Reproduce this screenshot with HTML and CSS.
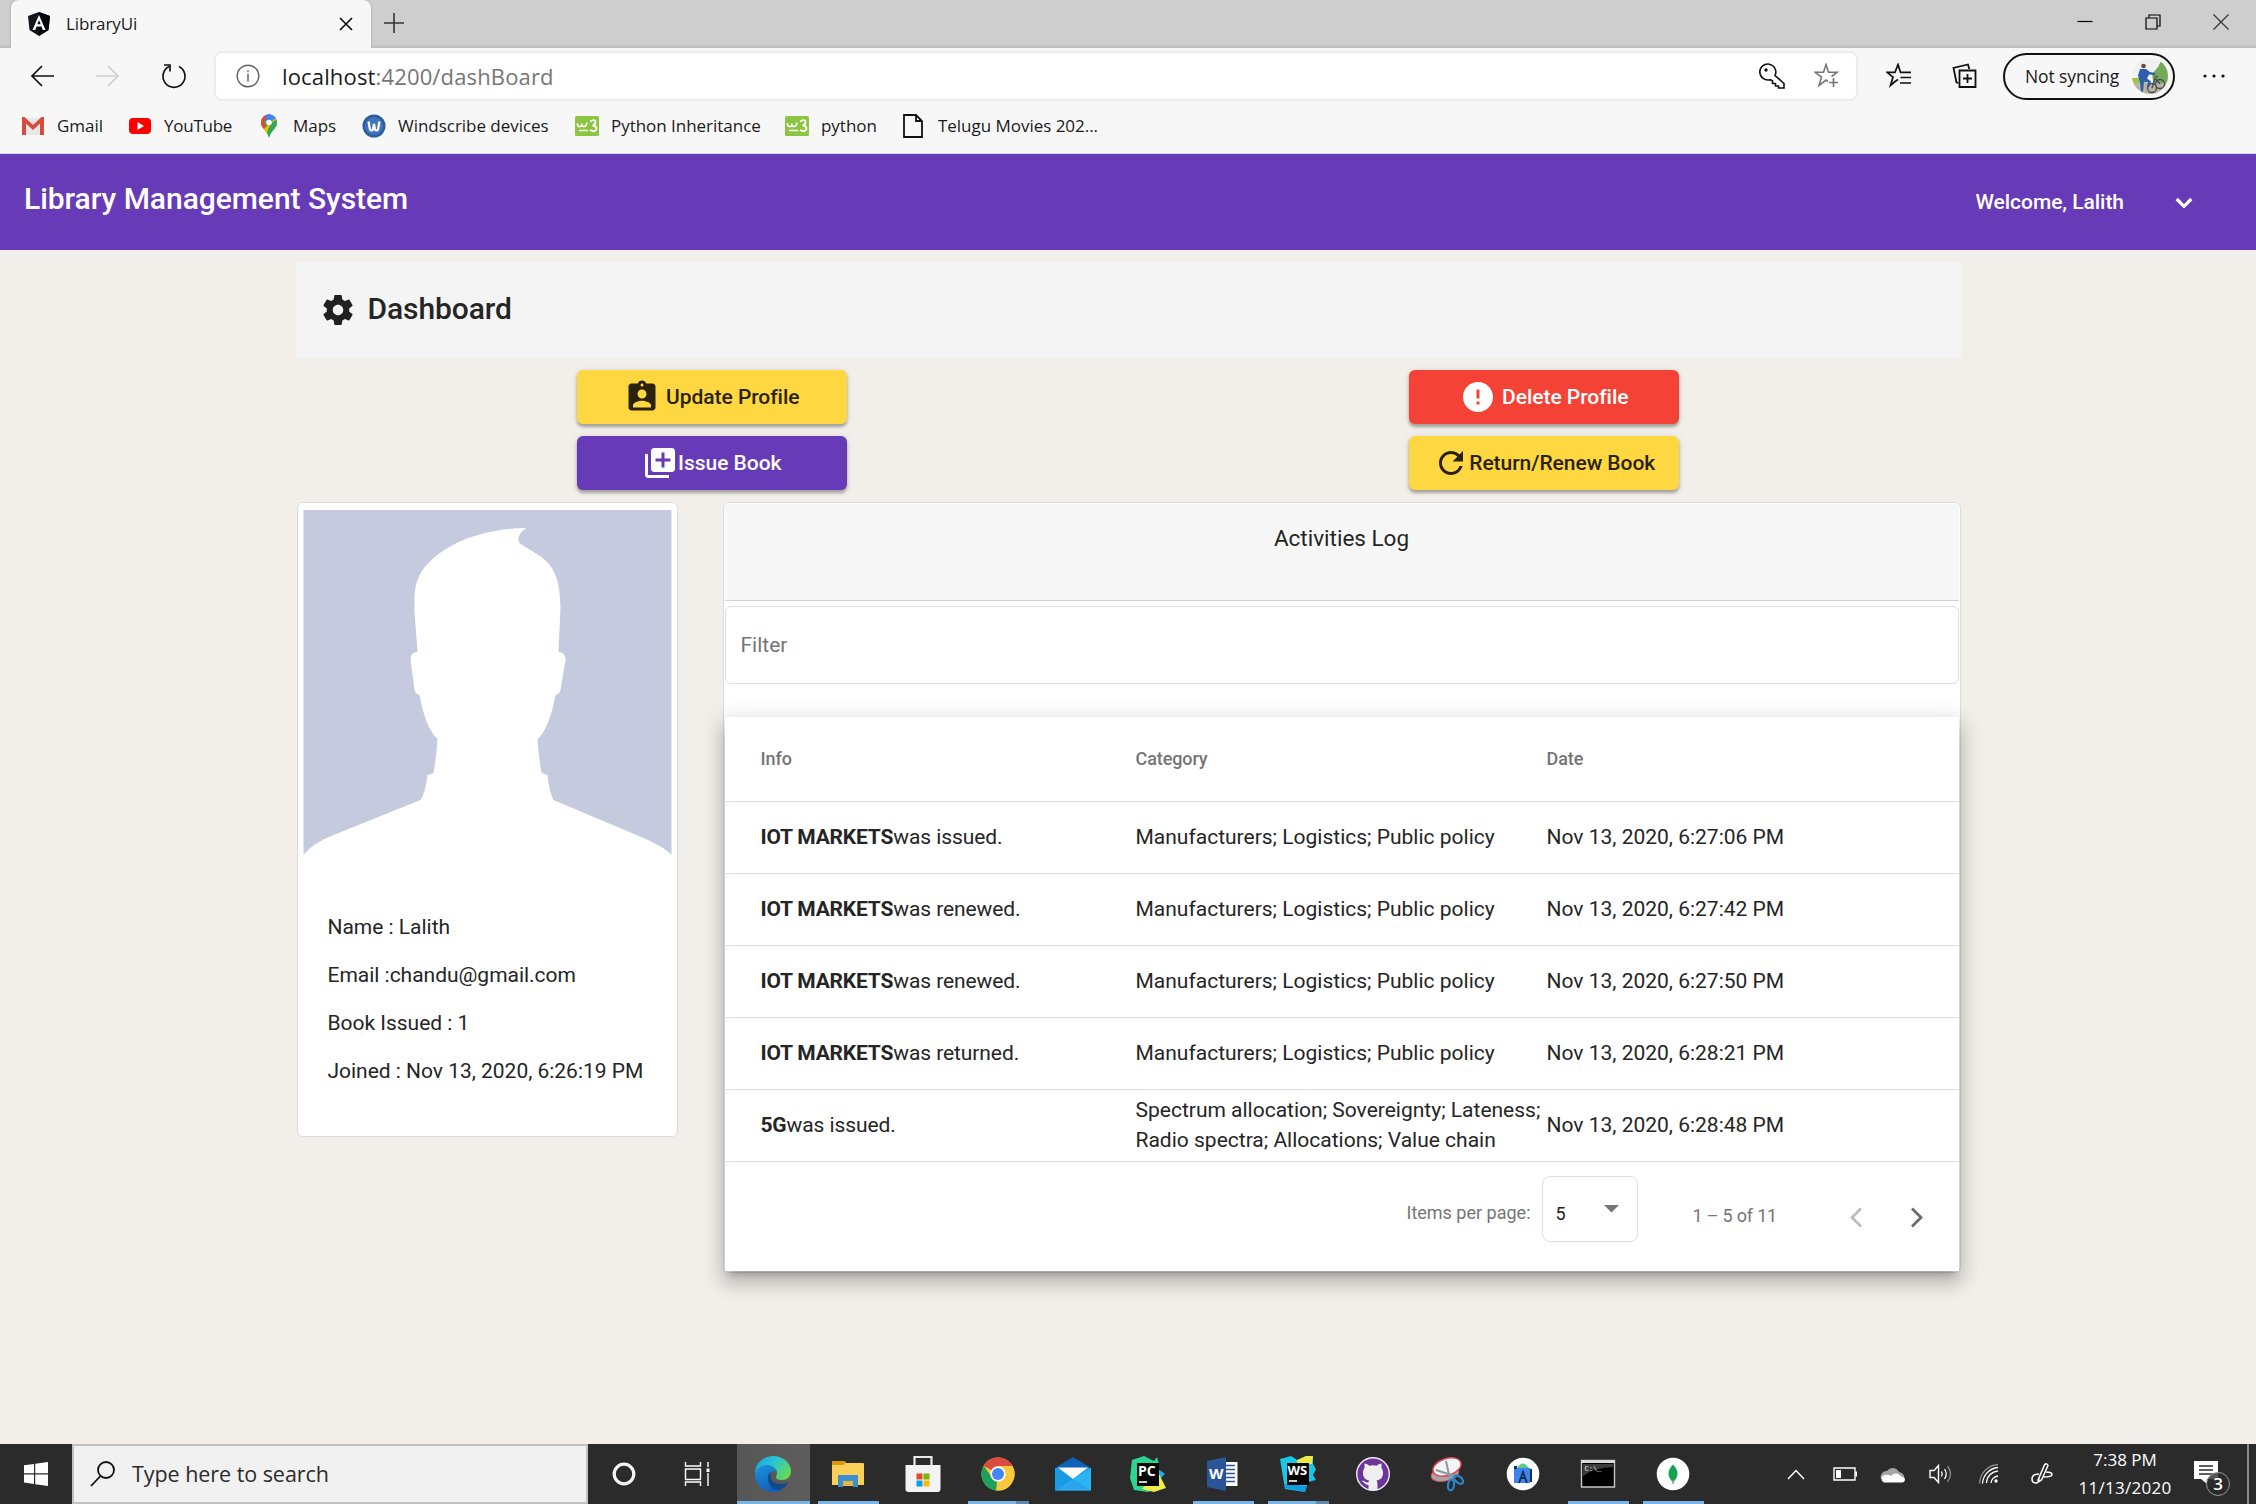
FILE: index.html
```html
<!DOCTYPE html>
<html lang="en">
<head>
<meta charset="utf-8">
<title>LibraryUi</title>
<link rel="stylesheet" href="styles.css">
</head>
<body>
<div class="screen">
  <div class="tabstrip">
    <div class="tab">
      <svg class="favicon" viewBox="0 0 24 24"><path d="M12 0 23 4 21.500 18 12 24 2.500 18 1 4z" fill="#11151c"/><path d="M12 0 23 4 21.500 18 12 24z" fill="#05070b"/><path d="M12 3 5.500 18h2.700l1.300-3.400h5L15.800 18h2.700zm0 5 1.700 4.300h-3.400z" fill="#fff"/></svg>
      <span class="tab-title">LibraryUi</span>
      <svg class="tab-close" viewBox="0 0 14 14"><path d="M1 1 13 13M13 1 1 13" stroke="#111" stroke-width="1.700"/></svg>
    </div>
    <svg class="tab-new" viewBox="0 0 20 20"><path d="M10 0V20M0 10H20" stroke="#333" stroke-width="1.600"/></svg>
    <div class="window-controls">
      <svg viewBox="0 0 16 16"><path d="M.5 7.500h15" stroke="#000" stroke-width="1.200"/></svg>
      <svg viewBox="0 0 16 16"><path d="M1 4h11v11H1zM4 4V1h11v11h-3" fill="none" stroke="#000" stroke-width="1.200"/></svg>
      <svg viewBox="0 0 16 16"><path d="M.5.500l15 15M15.500.500l-15 15" stroke="#333" stroke-width="1.200"/></svg>
    </div>
  </div>
  <div class="toolbar">
    <svg class="nav-back" viewBox="0 0 24 22"><path d="M12 1 2 11l10 10M2 11h22" fill="none" stroke="#111" stroke-width="1.700"/></svg>
    <svg class="nav-forward" viewBox="0 0 24 22"><path d="M12 1l10 10-10 10M22 11H0" fill="none" stroke="#cfcfcf" stroke-width="1.700"/></svg>
    <svg class="nav-reload" viewBox="0 0 26 26"><path d="M8 3.500A11 11 0 1 0 18 3.500" fill="none" stroke="#111" stroke-width="1.700"/><path d="M3 2h6v6.500" fill="none" stroke="#111" stroke-width="1.700"/></svg>
    <div class="address">
      <svg class="info" viewBox="0 0 24 24"><circle cx="12" cy="12" r="10.800" fill="none" stroke="#666" stroke-width="1.400"/><path d="M12 10v7.500M12 6.500v1.800" stroke="#666" stroke-width="1.500"/></svg>
      <span class="url">localhost<span class="url-rest">:4200/dashBoard</span></span>
      <svg class="key" viewBox="0 0 26 26"><path d="M16 12.500A8 8 0 1 0 11 16.700l2.500 1V20.500h3V23h3v2h5.500v-4.500z" fill="none" stroke="#111" stroke-width="1.600"/><circle cx="7" cy="7" r="1.700" fill="#111"/></svg>
      <svg class="star" viewBox="0 0 26 26"><path d="M14 18.500 12 17 5 22.500 7.500 14 1 9.300H9.500L12 1.500l2.500 7.800H23L17.500 13.500" fill="none" stroke="#777" stroke-width="1.600"/><path d="M19.500 15v9M15 19.500h9" stroke="#777" stroke-width="1.700"/></svg>
    </div>
    <svg class="favorites" viewBox="0 0 26 26"><path d="M9 18.500 4.500 22.500 7 14 1 9.300H9L12 1.500l2.500 7.800H25M9 18.500l3-2" fill="none" stroke="#111" stroke-width="1.700"/><path d="M14.500 14.500H25M14 20h11" stroke="#111" stroke-width="1.700"/></svg>
    <svg class="collections" viewBox="0 0 26 26"><path d="M7.500 7.500H23.500V24H7.500zM15.500 11v9M11 15.500h9" fill="none" stroke="#111" stroke-width="1.800"/><path d="M6.500 20 4.500 19.500 1.500 5 16 1.500 17.300 6" fill="none" stroke="#111" stroke-width="1.800"/></svg>
    <div class="profile">
      <span class="profile-text">Not syncing</span>
      <svg class="profile-photo" viewBox="0 0 36 36"><defs><clipPath id="round"><circle cx="18" cy="18" r="18"/></clipPath></defs><g clip-path="url(#round)"><rect width="36" height="36" fill="#eef3f2"/><path d="M20 16 26 9l3-6 7 8v18H22z" fill="#76a956"/><path d="M0 20h14v5H0z" fill="#a0c53e"/><path d="M0 25h36v11H0z" fill="#b9b4a0"/><circle cx="11.500" cy="8" r="2.300" fill="#6f4433"/><path d="M8 11h6l4 3 5 1v2l-6-.500-2 4 4 3-2 6-2-1 1-4-4-1-1 10H9l-1-9-2-7z" fill="#2e5fae"/><g fill="none" stroke="#444c5c" stroke-width="1.300"><circle cx="20" cy="30" r="4.500"/><circle cx="28" cy="26" r="4.500"/><path d="M20 30l3-10 5 6M23 18l3 1"/></g></g></svg>
    </div>
    <svg class="more" viewBox="0 0 22 6"><g fill="#111"><circle cx="2" cy="3" r="1.600"/><circle cx="11" cy="3" r="1.600"/><circle cx="20" cy="3" r="1.600"/></g></svg>
  </div>
  <div class="bookmarks">
    <div class="bookmark"><svg viewBox="0 0 24 24"><path d="M2 4h20v17H2z" fill="#e9e7e5"/><path d="M1 3h2.500L12 11l8.500-8H23v18h-4V9.500L12 16 5 9.500V21H1z" fill="#d54b3d"/></svg><span>Gmail</span></div>
    <div class="bookmark bm-youtube"><svg viewBox="0 0 24 24"><rect x="1" y="4" width="22" height="16" rx="4" fill="#f00"/><path d="M9.500 8v8l6.500-4z" fill="#fff"/></svg><span>YouTube</span></div>
    <div class="bookmark bm-maps"><svg viewBox="0 0 24 24"><defs><clipPath id="pin"><path d="M12 .5a8 8 0 0 0-8 8c0 6 6.500 8 8 15.500C13.500 16.500 20 14.500 20 8.500a8 8 0 0 0-8-8z"/></clipPath></defs><g clip-path="url(#pin)"><path d="M0 0h24v24H0z" fill="#34a853"/><path d="M0 0h14L4 11z" fill="#ea4335"/><path d="M8 0h16L10 10z" fill="#4285f4"/><path d="M2 11 5 6l4 5-3 5z" fill="#ea4335"/><path d="M5 17 20 2l1 5L10 20z" fill="#fbbc04"/><path d="M10 0h12v6l-5-1-4 4z" fill="#4285f4"/><path d="M14 9l8-5v12l-10 8-2-6z" fill="#34a853"/></g><circle cx="12" cy="8.500" r="2.800" fill="#fff"/></svg><span>Maps</span></div>
    <div class="bookmark bm-wind"><svg viewBox="0 0 24 24"><circle cx="12" cy="12" r="11.500" fill="#2e5d9f"/><circle cx="12" cy="12" r="9" fill="#3f74bd"/><path d="M6.500 7.500 8 15.500q1.500 2 3 0L12 10l1 5.500q1.500 2 3 0L17.500 7.500" fill="none" stroke="#fff" stroke-width="2.200"/></svg><span>Windscribe devices</span></div>
    <div class="bookmark bm-py"><svg viewBox="0 0 24 24"><rect y="2" width="24" height="20" rx="1.500" fill="#8bc541"/><path d="M2.500 9v2q2.200 3.500 4.300 0V9.500V11q2.200 3.500 4.500 0L12 8.500M4 16.500h9" fill="none" stroke="#fff" stroke-width="1.600"/><path d="M15 7.500q5-3 5.500.5 0 3-3 3.500 4 0 4 3.500-1.500 4-6.500 1" fill="none" stroke="#fff" stroke-width="1.900"/></svg><span>Python Inheritance</span></div>
    <div class="bookmark bm-py2"><svg viewBox="0 0 24 24"><rect y="2" width="24" height="20" rx="1.500" fill="#8bc541"/><path d="M2.500 9v2q2.200 3.500 4.300 0V9.500V11q2.200 3.500 4.500 0L12 8.500M4 16.500h9" fill="none" stroke="#fff" stroke-width="1.600"/><path d="M15 7.500q5-3 5.500.5 0 3-3 3.500 4 0 4 3.500-1.500 4-6.500 1" fill="none" stroke="#fff" stroke-width="1.900"/></svg><span>python</span></div>
    <div class="bookmark bm-telugu"><svg viewBox="0 0 24 24"><path d="M2 1h12l6 6v16H2zM14 1v6h6" fill="none" stroke="#111" stroke-width="1.800"/></svg><span>Telugu Movies 202...</span></div>
  </div>
  <header class="app-header">
    <span class="brand">Library Management System</span>
    <span class="welcome">Welcome, Lalith</span>
    <svg class="chevron" viewBox="0 0 18 12"><path d="M1.700 2 9 9.300 16.300 2" fill="none" stroke="#fff" stroke-width="3.200"/></svg>
  </header>
  <main class="page">
    <div class="container">
      <section class="dash-title">
        <svg viewBox="0 0 24 24"><path fill="#212121" d="M19.430 12.980c.04-.320.070-.640.070-.980s-.030-.660-.070-.980l2.110-1.650c.190-.150.240-.420.120-.640l-2-3.460c-.120-.220-.390-.300-.610-.220l-2.490 1c-.520-.400-1.080-.730-1.690-.980l-.380-2.650C14.460 2.180 14.250 2 14 2h-4c-.250 0-.460.180-.490.420l-.380 2.650c-.610.250-1.170.590-1.690.980l-2.490-1c-.230-.090-.490 0-.610.220l-2 3.460c-.130.220-.070.490.120.640l2.110 1.650c-.040.320-.070.650-.070.980s.030.660.070.980l-2.110 1.650c-.190.150-.240.420-.120.640l2 3.460c.120.220.390.300.610.220l2.490-1c.520.400 1.080.730 1.690.980l.380 2.650c.030.240.240.420.490.420h4c.250 0 .460-.180.490-.420l.380-2.650c.610-.250 1.170-.590 1.690-.980l2.490 1c.230.090.490 0 .610-.220l2-3.460c.120-.220.070-.490-.120-.640l-2.110-1.650zM12 15.500c-1.930 0-3.500-1.570-3.500-3.500s1.570-3.500 3.500-3.500 3.500 1.570 3.500 3.500-1.570 3.500-3.500 3.500z"/></svg>
        <h1>Dashboard</h1>
      </section>
      <section class="actions">
        <button class="btn accent update"><svg viewBox="0 0 24 24"><path d="M19 3h-4.180C14.400 1.840 13.300 1 12 1c-1.300 0-2.400.840-2.820 2H5c-1.100 0-2 .9-2 2v14c0 1.100.9 2 2 2h14c1.100 0 2-.9 2-2V5c0-1.100-.9-2-2-2zm-7 0c.550 0 1 .450 1 1s-.450 1-1 1-1-.450-1-1 .450-1 1-1zm0 4c1.660 0 3 1.340 3 3s-1.340 3-3 3-3-1.340-3-3 1.340-3 3-3zm6 12H6v-1.400c0-2 4-3.100 6-3.100s6 1.100 6 3.100V19z"/></svg><span>Update Profile</span></button>
        <button class="btn warn delete"><svg viewBox="0 0 24 24"><path d="M12 2C6.480 2 2 6.480 2 12s4.480 10 10 10 10-4.480 10-10S17.520 2 12 2zm1 15h-2v-2h2v2zm0-4h-2V7h2v6z"/></svg><span>Delete Profile</span></button>
        <button class="btn primary issue"><svg viewBox="0 0 24 24"><path d="M4 6H2v14c0 1.100.9 2 2 2h14v-2H4V6zm16-4H8c-1.100 0-2 .9-2 2v12c0 1.100.9 2 2 2h12c1.100 0 2-.9 2-2V4c0-1.100-.9-2-2-2zm-1 9h-4v4h-2v-4H9V9h4V5h2v4h4v2z"/></svg><span>Issue Book</span></button>
        <button class="btn accent renew"><svg viewBox="0 0 24 24"><path d="M17.650 6.350C16.200 4.900 14.210 4 12 4c-4.420 0-7.990 3.580-7.990 8s3.570 8 7.990 8c3.730 0 6.840-2.550 7.730-6h-2.080c-.820 2.330-3.040 4-5.650 4-3.310 0-6-2.690-6-6s2.690-6 6-6c1.660 0 3.140.690 4.220 1.780L13 11h7V4l-2.350 2.350z"/></svg><span>Return/Renew Book</span></button>
      </section>
      <div class="columns">
        <aside class="user-card">
          <svg class="avatar" viewBox="0 0 368 369"><path d="M0 0h368v369H0z" fill="#fff"/><path d="M0 0H368V345Q361 337 340 328L250 290Q246 283 244 265L238 263Q235 245 234 229.500Q246 218 252 185Q256 184 257 180L262 150Q262 142 255 142L257 98C257 48 236 48 216 33Q212 25 223 18C190 18 150 28 126 52C109 68 111 86 111 102L114 142Q107 142 107 149L111 180Q112 184 116 185Q122 218 134 229Q133 245 130 263L124 265Q122 283 117 290L30 325Q9 333 0 345z" fill="#c5cadf"/></svg>
          <div class="user-info">
            <p>Name : Lalith</p>
            <p>Email :chandu@gmail.com</p>
            <p>Book Issued : 1</p>
            <p>Joined : Nov 13, 2020, 6:26:19 PM</p>
          </div>
        </aside>
        <section class="log">
          <div class="log-head"><span>Activities Log</span></div>
          <div class="filter"><span>Filter</span></div>
          <div class="table">
            <div class="row head"><span>Info</span><span>Category</span><span>Date</span></div>
            <div class="row"><span><b>IOT MARKETS</b><i>was issued.</i></span><span>Manufacturers; Logistics; Public policy</span><span>Nov 13, 2020, 6:27:06 PM</span></div>
            <div class="row"><span><b>IOT MARKETS</b><i>was renewed.</i></span><span>Manufacturers; Logistics; Public policy</span><span>Nov 13, 2020, 6:27:42 PM</span></div>
            <div class="row"><span><b>IOT MARKETS</b><i>was renewed.</i></span><span>Manufacturers; Logistics; Public policy</span><span>Nov 13, 2020, 6:27:50 PM</span></div>
            <div class="row"><span><b>IOT MARKETS</b><i>was returned.</i></span><span>Manufacturers; Logistics; Public policy</span><span>Nov 13, 2020, 6:28:21 PM</span></div>
            <div class="row"><span><b>5G</b><i>was issued.</i></span><span>Spectrum allocation; Sovereignty; Lateness;<br>Radio spectra; Allocations; Value chain</span><span>Nov 13, 2020, 6:28:48 PM</span></div>
            <div class="paginator">
              <span class="per-page">Items per page:</span>
              <div class="select"><span>5</span><svg viewBox="0 0 15 8"><path d="M0 0h15L7.500 7.500z" fill="#757575"/></svg></div>
              <span class="range">1 – 5 of 11</span>
              <svg class="prev" viewBox="0 0 14 21"><path d="M12 1.500 3 10.500l9 9" fill="none" stroke="#bdbdbd" stroke-width="2.800"/></svg>
              <svg class="next" viewBox="0 0 14 21"><path d="M2 1.500 11 10.500l-9 9" fill="none" stroke="#6b6b6b" stroke-width="2.800"/></svg>
            </div>
          </div>
        </section>
      </div>
    </div>
  </main>
  <footer class="taskbar">
    <div class="start"><svg viewBox="0 0 24 24"><path d="M0 3.300 10 1.900V11.300H0zM11.200 1.700 24 0V11.300H11.200zM0 12.500H10V22L0 20.600zM11.200 12.500H24V24L11.200 22.200z" fill="#fff"/></svg></div>
    <div class="search"><svg viewBox="0 0 26 26"><circle cx="16" cy="9" r="8" fill="none" stroke="#111" stroke-width="1.800"/><path d="M10.500 15 1 25" stroke="#111" stroke-width="1.800"/></svg><span>Type here to search</span></div>
    <div class="app cortana"><svg viewBox="0 0 36 36"><circle cx="18" cy="18" r="9.800" fill="none" stroke="#f4f4f4" stroke-width="3.200"/></svg></div>
    <div class="app"><svg viewBox="0 0 36 36"><path d="M5.500 6v4h15V6M5.500 13h15v10.500h-15zM5.500 30v-4h15v4M28 6v5M28 17v13" fill="none" stroke="#fff" stroke-width="1.400"/><rect x="26.500" y="12.500" width="3" height="3.500" fill="#fff"/></svg></div>
    <div class="app active"><svg viewBox="0 0 36 36"><defs><linearGradient id="eg" x1="0" y1="0" x2="1" y2=".6"><stop offset="0" stop-color="#1b9de2"/><stop offset=".5" stop-color="#2cc3d2"/><stop offset="1" stop-color="#62d957"/></linearGradient><linearGradient id="eb" x1="0" y1="0" x2=".5" y2="1"><stop offset="0" stop-color="#1c93dc"/><stop offset="1" stop-color="#0f62bb"/></linearGradient></defs><path d="M0 18C0 7 8 0 18 0s18 7 18 15c0 6-4 9-9 9-4 0-6-1-6-3 0-1 1-2 1-4 0-4-4-7-9-7C7 10 1 13 0 18z" fill="url(#eg)"/><path d="M0 18c1-6 6-9 12-9 5 0 9 3 10 7-3-2-9 0-9 6 0 7 7 12 14 12-3 2-6 2-9 2C8 36 0 28 0 18z" fill="url(#eb)"/><path d="M13 22c0-3 1-5 3-6-2 7 2 12 10 12 4 0 6-2 7-2-2 5-5 7-8 8-7 1-12-5-12-12z" fill="#114a8b"/></svg></div>
    <div class="app run"><svg viewBox="0 0 36 36"><path d="M2 5h12l2 2h17q1 0 1 1v21H2z" fill="#f9cf57"/><path d="M2 5h12l2 1-2 3H2z" fill="#d89b0d"/><path d="M8 19h20v12h-5v-6H13v6H8z" fill="#3b8ed2"/><path d="M13 25h10v5H13z" fill="#e8b53e"/></svg></div>
    <div class="app"><svg viewBox="0 0 36 36"><path d="M9.500 11V1h17v10" fill="none" stroke="#e9e9e9" stroke-width="2.200"/><path d="M.5 9h35v24q0 3-3 3h-29q-3 0-3-3z" fill="#f3f3f3"/><path d="M11.500 17.500h6v6h-6z" fill="#e64a26"/><path d="M18.500 17.500h6v6h-6z" fill="#79b700"/><path d="M11.500 24.500h6v6h-6z" fill="#01a2ec"/><path d="M18.500 24.500h6v6h-6z" fill="#fdb800"/></svg></div>
    <div class="app run split"><svg viewBox="0 0 36 36"><circle cx="18" cy="18" r="16.500" fill="#fbc83b"/><path d="M18 18 3.700 9.750A16.500 16.500 0 0 1 32.300 9.750z" fill="#d94b3e"/><path d="M18 18 16 34.400A16.500 16.500 0 0 1 3.700 9.750L11 20z" fill="#1ba159"/><path d="M18 9.750H32.300A16.500 16.500 0 0 1 16 34.400L25 22z" fill="#fbc83b"/><path d="M3.700 9.750A16.500 16.500 0 0 1 32.300 9.750H18z" fill="#d94b3e"/><circle cx="18" cy="18" r="7.700" fill="#fff"/><circle cx="18" cy="18" r="6" fill="#4285f4"/></svg></div>
    <div class="app"><svg viewBox="0 0 36 36"><path d="M0 12 18 1l18 11v4H0z" fill="#0e62b8"/><path d="M0 12h36v22.500H0z" fill="#1a9be6"/><path d="M3 11.500h30L18 23z" fill="#fafafa"/><path d="M36 12v22.500L18 23z" fill="#2ab4f2"/><path d="M18 23 36 34.500H0z" fill="#2aa6ee"/></svg></div>
    <div class="app"><svg viewBox="0 0 36 36"><path d="M2 4 14 0l10 5 3-4 2 7-2 24-9 4-14-2L0 22z" fill="#2bd591"/><path d="M24 10 35 18l-6 6z" fill="#18b5e4"/><path d="M27 14l9 18-12 4-12-3z" fill="#f0ee4b"/><rect x="7" y="7" width="22" height="23" fill="#070707"/><text x="8" y="19.500" class="logo-text">PC</text><path d="M9 26h8" stroke="#fff" stroke-width="1.600"/></svg></div>
    <div class="app run"><svg viewBox="0 0 36 36"><path d="M18 6h14.500v24H18z" fill="#fff"/><path d="M20 9.500h10M20 13.500h10M20 17.500h10M20 21.500h10M20 25.500h10" stroke="#2a5699" stroke-width="1.600"/><path d="M2 5 21 1v34L2 31z" fill="#2a5699"/><text x="4" y="23" class="logo-w">W</text></svg></div>
    <div class="app run split"><svg viewBox="0 0 36 36"><path d="M0 3 11 0l8 5 7-5h7l0 8 3 5-3 6 3 5-8 2-3 10-20-3z" fill="#19c6e5"/><path d="M17 4 26 0h7l-1 8H17z" fill="#e9ea47"/><path d="M4 28l22 2-1 6-20-4z" fill="#129bdf"/><rect x="7" y="7" width="22" height="22" fill="#050505"/><text x="7.500" y="19" class="logo-text logo-ws">WS</text><path d="M9 25h8" stroke="#fff" stroke-width="1.600"/></svg></div>
    <div class="app"><svg viewBox="0 0 36 36"><circle cx="18" cy="18" r="16.300" fill="#6f349b" stroke="#f0e9f5" stroke-width="1.400"/><path d="M8 17c0-2 .5-4 1.500-5V7.500q2 0 5 2.200 3.500-.7 7 0 3-2.200 5-2.200V12c1 1 1.500 3 1.500 5 0 5-3 7-6.500 7.500.7 1 1 2 1 4V34h-9v-5c-4 0-4-3-7-4 3-1 4 2 7 1.500 0-1 .3-1.500.8-2C11 24 8 22 8 17z" fill="#eee"/></svg></div>
    <div class="app"><svg viewBox="0 0 36 36"><ellipse cx="15" cy="18" rx="14" ry="7" fill="#a5a5a7" stroke="#d9525f" transform="rotate(-12 15 18)"/><ellipse cx="17" cy="11" rx="14.500" ry="8.500" fill="#f4f4f4" stroke="#dc4453" stroke-width="1.500" transform="rotate(-18 17 11)"/><path d="M16 5l4 18M6 14l18 6" stroke="#8f969c" stroke-width="2"/><g fill="none" stroke="#2788d0" stroke-width="2.200"><ellipse cx="21" cy="29" rx="3" ry="5.500" transform="rotate(8 21 29)"/><ellipse cx="28.500" cy="23.500" rx="3" ry="5.500" transform="rotate(-50 28.500 23.500)"/></g></svg></div>
    <div class="app"><svg viewBox="0 0 36 36"><circle cx="18" cy="18" r="16.300" fill="#fff"/><path d="M12 12q6-9 12 0z" fill="#4fd080"/><path d="M9 12h16v15H9z" fill="#3f82f1"/><path d="M25 13h2v13h-2zM9 10h3v3H9z" fill="#143250"/><path d="M14 27l4-11 4 11M16 22h4" fill="none" stroke="#143250" stroke-width="1.800"/></svg></div>
    <div class="app run"><svg viewBox="0 0 36 36"><path d="M1.500 4.500h33v26.500h-33z" fill="#000" stroke="#c8c8c8" stroke-width="1.400"/><path d="M1.500 4.500h33v2.500h-33z" fill="#ddd"/><path d="M3 8h30v3Q12 12 3 20z" fill="#3d3d3d"/><text x="4.500" y="14.500" class="logo-cmd">C:\_</text></svg></div>
    <div class="app run"><svg viewBox="0 0 36 36"><circle cx="18" cy="18" r="16.300" fill="#fff"/><path d="M18 8.500q9 9 0 18-9-9 0-18z" fill="#13a552"/><path d="M18 24v4" stroke="#7d9c83" stroke-width="1.300"/></svg></div>
    <div class="tray">
      <svg class="up" viewBox="0 0 18 11"><path d="M1 10 9 1.500 17 10" fill="none" stroke="#fff" stroke-width="1.500"/></svg>
      <svg class="battery" viewBox="0 0 24 14"><path d="M1 1h21v12H1zM23.500 4.500v5" fill="none" stroke="#fff" stroke-width="1.400"/><path d="M3 3h5v8H3z" fill="#fff"/></svg>
      <svg class="cloud" viewBox="0 0 25 17"><path d="M1 13A6 6 0 0 1 7 5 7 7 0 0 1 19 6q5 1 5.500 6z" fill="#a5a5a5"/><path d="M4 16.500a4 4 0 0 1 0-7.500q4-1 7 1 3-4 8-1.500 1.500 1 2 2 4 .5 4 3.500-.5 2.500-3 2.500z" fill="#fff"/></svg>
      <svg class="sound" viewBox="0 0 23 20"><path d="M1 6.500h4L9.500 1.500v17L5 13.500H1z" fill="none" stroke="#fff" stroke-width="1.400"/><path d="M12.500 7.500q1.500 2.500 0 5M15.500 5q3.500 5 0 10" fill="none" stroke="#fff" stroke-width="1.300"/><path d="M18.500 2q6 8 0 16" fill="none" stroke="#8a8a8a" stroke-width="1.300"/></svg>
      <svg class="wifi" viewBox="0 0 20 20"><circle cx="17" cy="17" r="1.700" fill="#fff"/><path d="M12 19a8 8 0 0 1 7-7M7.500 19A12 12 0 0 1 19 7.200M3.500 19.500A17 17 0 0 1 19 3.500" fill="none" stroke="#fff" stroke-width="1.300"/><path d="M.7 19.500A19 19 0 0 1 19 .7" fill="none" stroke="#999" stroke-width="1.200"/></svg>
      <svg class="pen" viewBox="0 0 22 22"><path d="M8 11q-7 0-7 5 0 4 4 4 3 0 3-5M7 17 13.500 2q2-2.500 3.500.5L10.500 17l-3.300 2zM15 9q6 0 6 2.500T12 14" fill="none" stroke="#fff" stroke-width="1.500"/></svg>
      <div class="clock"><span>7:38 PM</span><span class="date">11/13/2020</span></div>
      <div class="notif"><svg viewBox="0 0 24 24"><path d="M0 0h24v18H13L13 23 7 18H0z" fill="#fff"/><path d="M5 5h14M5 9h14M5 13h14" stroke="#2b2b2b" stroke-width="1.400"/></svg><span class="count">3</span></div>
      <div class="show-desktop"></div>
    </div>
  </footer>
</div>
</body>
</html>
```

FILE: styles.css
```css
* { box-sizing: border-box; }
body { margin: 0; font-family: Roboto, "Liberation Sans", sans-serif; color: #252525; }
svg { display: block; flex: none; }
.screen { width: 2256px; height: 1504px; display: flex; flex-direction: column; overflow: hidden; background: #f2efea; white-space: nowrap; }

.tabstrip, .toolbar, .bookmarks, .taskbar { font-family: "Open Sans", "Noto Sans", sans-serif; color: #1a1a1a; }

/* Browser tabs */
.tabstrip { height: 48px; flex: none; display: flex; align-items: center; background: linear-gradient(#cecece 44px, #bcbcbc); }
.tab { height: 48px; width: 360px; margin-left: 11px; padding: 0 18px 0 16px; display: flex; align-items: center; background: #f7f7f7; border-radius: 8px 8px 0 0; box-shadow: 0 0 3px #0003; }
.favicon { width: 24px; height: 24px; }
.tab-title { margin: 0 0 1px 15px; font-size: 17px; letter-spacing: -.1px; flex: 1; }
.tab-close { width: 14px; height: 14px; }
.tab-new { width: 20px; height: 20px; margin: 0 0 2px 13px; }
.window-controls { margin: 0 27px 5px auto; display: flex; gap: 52px; }
.window-controls svg { width: 16px; height: 16px; }

/* Address row */
.toolbar { height: 57px; flex: none; display: flex; align-items: center; padding-bottom: 1px; background: #f7f7f7; }
.nav-back { width: 24px; height: 22px; margin-left: 30px; }
.nav-forward { width: 24px; height: 22px; margin-left: 42px; }
.nav-reload { width: 26px; height: 26px; margin-left: 41px; }
.address { width: 1640px; height: 46px; margin-left: 29px; padding: 0 16px 0 20px; display: flex; align-items: center; background: #fff; border-radius: 6px; box-shadow: 0 0 4px #0002; }
.info { width: 24px; height: 24px; }
.url { margin-left: 22px; font-size: 22px; letter-spacing: .15px; flex: 1; }
.url-rest { color: #767676; }
.key { width: 26px; height: 26px; margin-right: 29px; }
.star { width: 26px; height: 26px; }
.favorites { width: 26px; height: 26px; margin-left: 30px; }
.collections { width: 26px; height: 26px; margin-left: 40px; }
.profile { width: 172px; height: 47px; margin-left: 25px; padding: 0 5px 0 20px; display: flex; align-items: center; justify-content: space-between; border: 2px solid #111; border-radius: 24px; }
.profile-text { font-size: 17.500px; letter-spacing: -.1px; }
.profile-photo { width: 36px; height: 36px; }
.more { width: 22px; height: 6px; margin-left: 28px; }

/* Favourites bar */
.bookmarks { height: 49px; flex: none; display: flex; align-items: center; padding: 0 0 7px 21px; background: #f7f7f7; border-bottom: 1px solid #ddd6ea; font-size: 17px; letter-spacing: -.03px; }
.bookmark { display: flex; align-items: center; gap: 12px; width: 107px; }
.bookmark svg { width: 24px; height: 24px; }
.bm-youtube { width: 129px; letter-spacing: -.25px; }
.bm-maps { width: 105px; }
.bm-wind { width: 213px; }
.bm-py { width: 210px; }
.bm-py2 { width: 117px; }
.bm-telugu { width: 200px; }

/* Application header */
.app-header { height: 96px; flex: none; display: flex; align-items: flex-start; padding: 0 63px 0 24px; background: #673ab7; color: #fff; font-weight: 500; }
.brand { font-size: 30px; line-height: 36px; margin-top: 27px; flex: 1; letter-spacing: -.04px; }
.welcome { font-size: 21px; line-height: 26px; margin-top: 35px; letter-spacing: -.04px; }
.chevron { width: 18px; height: 12px; margin: 43px 0 0 51px; }

.page { flex: 1; display: flex; justify-content: center; border-top: 2px solid #f0eaf1; }
.container { width: 1665px; display: flex; flex-direction: column; }
.dash-title { height: 96px; flex: none; margin-top: 10px; padding-left: 24px; display: flex; align-items: center; background: #f4f4f4; }
.dash-title svg { width: 36px; height: 36px; }
.dash-title h1 { margin: 0 0 2px 12px; font-size: 30px; line-height: 36px; font-weight: 500; letter-spacing: -.1px; }
.actions { display: grid; grid-template-columns: 1fr 1fr; justify-items: center; gap: 12px 0; margin-top: 12px; }
.btn { width: 270px; height: 54px; padding: 0; border: 0; border-radius: 6px; display: flex; align-items: center; justify-content: center; font: 500 21px/53px Roboto, sans-serif; letter-spacing: -.04px; box-shadow: 0 3px 3px #0004, 0 1px 6px #0002; }
.btn svg { width: 36px; height: 36px; fill: currentColor; }
.accent { background: #ffd740; color: #2b220b; }
.warn { background: #f44336; color: #fff; }
.primary { background: #673ab7; color: #fff; }
.update span { margin-left: 6px; }
.delete span { margin-left: 6px; }

.columns { display: flex; justify-content: space-between; align-items: flex-start; margin-top: 12px; padding: 0 0 0 1px; }
.user-card { width: 381px; height: 635px; padding: 7px 5px; background: #fff; border: 1px solid #dedcda; border-radius: 6px; }
.avatar { width: 369px; height: 369px; }
.user-info { padding: 24px 0 0 25px; font-size: 21px; letter-spacing: -.02px; }
.user-info p { margin: 0; line-height: 48px; }

.log { width: 1238px; padding: 1px; background: #fff; border: 1px solid #dedcda; border-radius: 6px; }
.log-head { height: 97px; border-bottom: 1px solid #d3d3d3; background: #f7f7f7; text-align: center; font-size: 22.500px; line-height: 27px; padding-top: 21px; }
.filter { height: 78px; margin-top: 5px; padding-left: 15px; border: 1px solid #dedede; border-radius: 6px; font-size: 21px; line-height: 77px; color: #757575; }
.table { margin-top: 33px; background: #fff; box-shadow: 0 7px 7px -4px #0003, 0 12px 17px 2px #00000024, 0 5px 22px 4px #0000001f; }
.row { height: 72px; display: grid; grid-template-columns: 375px 411px 1fr; align-items: center; padding: 0 0 2px 36px; border-bottom: 1px solid #dedede; font-size: 21px; line-height: 30px; }
.row b { letter-spacing: -.2px; }
.row i { font-style: normal; letter-spacing: -.08px; }
.row.head { height: 85px; padding-bottom: 1px; font-size: 18px; font-weight: 500; color: #757575; letter-spacing: -.1px; }
.paginator { height: 109px; display: flex; align-items: flex-start; font-size: 18px; line-height: 24px; color: #757575; padding-left: 682px; }
.per-page { margin-top: 39px; width: 135px; }
.select { width: 96px; height: 66px; margin-top: 14px; padding: 0 18px 0 13px; display: flex; justify-content: space-between; border: 1px solid #dedede; border-radius: 8px; color: #212121; line-height: 73px; }
.select svg { width: 15px; height: 8px; margin-top: 28px; }
.range { margin: 42px 0 0 55px; width: 156px; letter-spacing: -.2px; }
.prev { width: 14px; height: 21px; margin-top: 45px; }
.next { width: 14px; height: 21px; margin: 45px 0 0 47px; }

/* Windows taskbar */
.taskbar { height: 60px; flex: none; display: flex; background: #2b2b2c; color: #fff; }
.start { width: 72px; padding: 18px 24px; }
.start svg { width: 24px; height: 24px; }
.search { width: 516px; display: flex; align-items: center; padding: 0 0 1px 16px; background: #f1f1f1; border: 2px solid #c1c1c1; color: #2b2b2b; font-size: 21.500px; letter-spacing: -.05px; }
.search svg { width: 26px; height: 26px; margin-right: 16px; }
.app { width: 75px; height: 60px; padding: 12px 19px 0; position: relative; }
.app svg { width: 36px; height: 36px; }
.cortana { width: 73px; padding-left: 18px; }
.active { background: linear-gradient(90deg, #565656, #5f5d5c) no-repeat 1px 0 / 73px 100%; }
.active::after, .run::after { content: ""; position: absolute; left: 7px; bottom: 0; width: 61px; height: 3px; background: #78b5e6; }
.active::after { left: 1px; width: 73px; }
.split::after { background: linear-gradient(90deg, #78b5e6 48px, #5e88ad 48px); }
.logo-text { font: 700 14px "Open Sans", sans-serif; fill: #fff; }
.logo-ws { font-size: 13px; }
.logo-w { font: 700 15px "Open Sans", sans-serif; fill: #fff; }
.logo-cmd { font: 7px "Liberation Mono", monospace; fill: #eee; }
.tray { flex: 1; display: flex; align-items: center; padding-left: 76px; }
.up { width: 18px; height: 11px; }
.battery { width: 24px; height: 14px; margin-left: 28px; }
.cloud { width: 25px; height: 17px; margin-left: 23px; }
.sound { width: 23px; height: 20px; margin-left: 24px; }
.wifi { width: 20px; height: 20px; margin-left: 27px; }
.pen { width: 22px; height: 22px; margin-left: 32px; }
.clock { width: 94px; margin: 0 0 1px 25px; display: flex; flex-direction: column; align-items: center; font-size: 17px; line-height: 28px; }
.date { letter-spacing: .28px; }
.notif { position: relative; margin: 0 0 2px 22px; }
.notif svg { width: 24px; height: 24px; }
.count { position: absolute; left: 12px; top: 11px; width: 24px; height: 24px; border-radius: 50%; border: 1px solid #999; background: #2b2b2ccc; text-align: center; font-size: 17px; font-weight: 600; line-height: 22px; }
.show-desktop { width: 2px; height: 60px; margin-left: 29px; background: #8b8b8b; }
```
